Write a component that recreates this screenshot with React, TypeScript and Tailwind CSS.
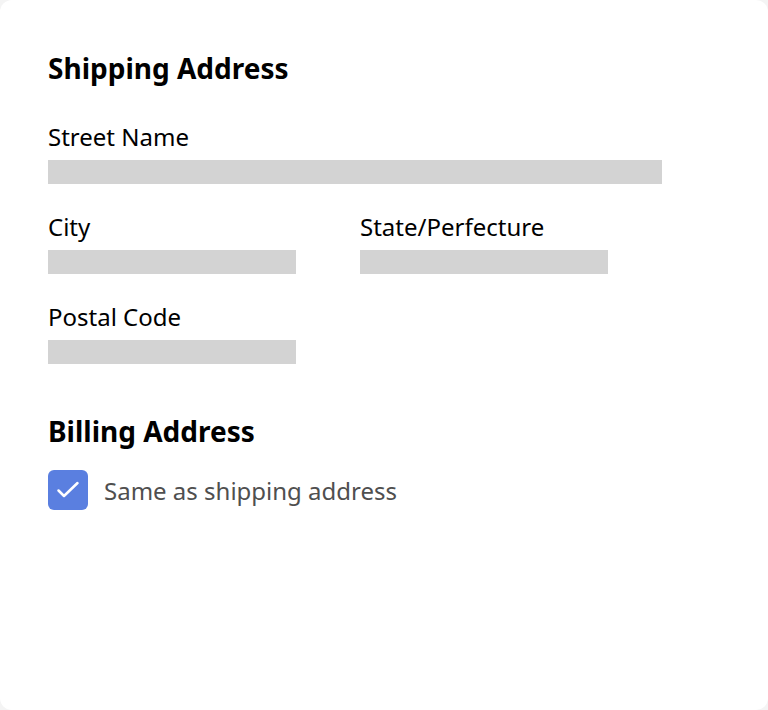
import React from 'react';

const font = { fontFamily: '"Noto Sans", "Open Sans", sans-serif' };

const Field: React.FC<{ label: string; width: string; className?: string }> = ({ label, width, className = '' }) => (
  <div className={className}>
    <p className="text-[24px] leading-[32px] text-black">{label}</p>
    <div className={`mt-[7px] h-6 bg-[#d3d3d3] ${width}`} />
  </div>
);

export default function App() {
  return (
    <div className="w-[768px] h-[710px] bg-[#f4f4f4]" style={font}>
      <div className="h-full rounded-xl bg-white px-12 pt-[50px]">
        <h2 className="text-[28px] leading-[36px] font-bold text-black">Shipping Address</h2>

        <Field label="Street Name" width="w-[614px]" className="mt-[35px]" />

        <div className="mt-[27px] grid grid-cols-[248px_248px] gap-x-16">
          <Field label="City" width="w-full" />
          <Field label="State/Perfecture" width="w-full" />
        </div>

        <Field label="Postal Code" width="w-[248px]" className="mt-[27px]" />

        <h2 className="mt-[49px] text-[28px] leading-[36px] font-bold text-black">Billing Address</h2>

        <label className="mt-[21px] flex items-center gap-4">
          <span className="flex h-10 w-10 items-center justify-center rounded-md bg-[#5a7fe0]">
            <svg width="40" height="40" viewBox="0 0 40 40" fill="none" stroke="white" strokeWidth="2.5" strokeLinecap="round" strokeLinejoin="round">
              <path d="M10.5 20.5l5.5 5.5L29.5 13" />
            </svg>
          </span>
          <span className="pt-[2px] text-[24px] leading-[32px] text-[#4f4f4f]">Same as shipping address</span>
        </label>
      </div>
    </div>
  );
}
